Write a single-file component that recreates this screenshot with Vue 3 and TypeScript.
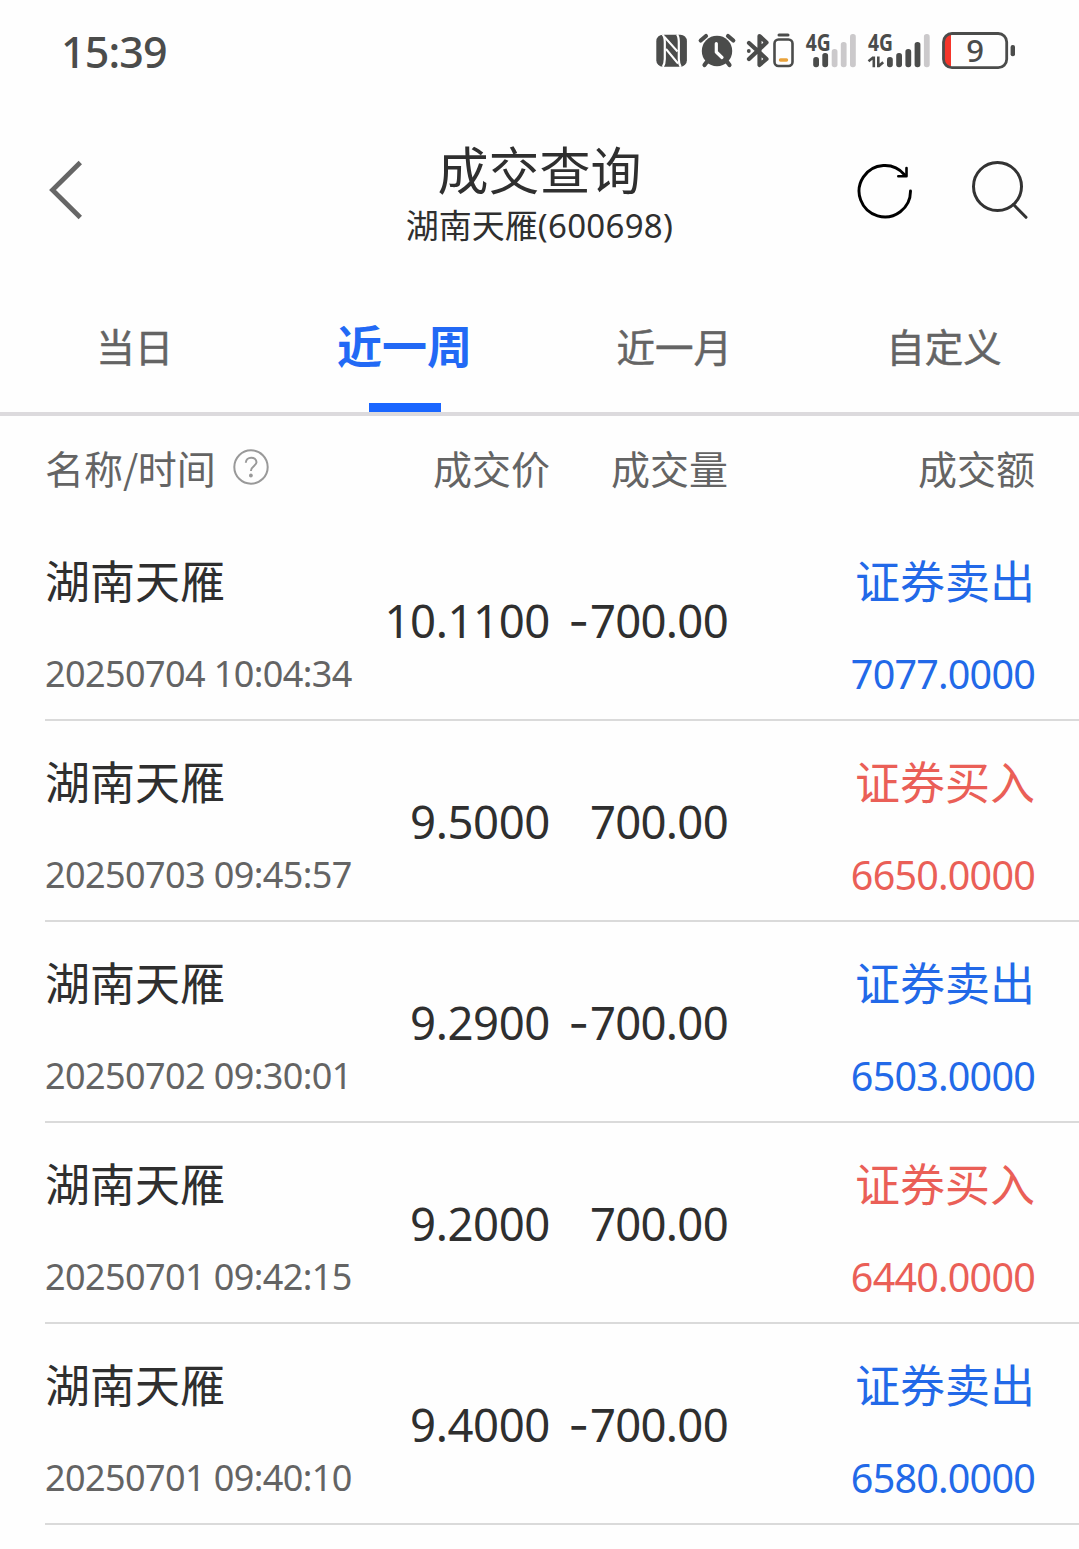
<script setup lang="ts">
import { ref } from 'vue'

interface Trade {
  name: string
  time: string
  price: string
  negative: boolean
  volume: string
  side: 'buy' | 'sell'
  amount: string
}

const tabs = ['当日', '近一周', '近一月', '自定义']
const active = ref(1)

const trades: Trade[] = [
  { name: '湖南天雁', time: '20250704 10:04:34', price: '10.1100', negative: true, volume: '700.00', side: 'sell', amount: '7077.0000' },
  { name: '湖南天雁', time: '20250703 09:45:57', price: '9.5000', negative: false, volume: '700.00', side: 'buy', amount: '6650.0000' },
  { name: '湖南天雁', time: '20250702 09:30:01', price: '9.2900', negative: true, volume: '700.00', side: 'sell', amount: '6503.0000' },
  { name: '湖南天雁', time: '20250701 09:42:15', price: '9.2000', negative: false, volume: '700.00', side: 'buy', amount: '6440.0000' },
  { name: '湖南天雁', time: '20250701 09:40:10', price: '9.4000', negative: true, volume: '700.00', side: 'sell', amount: '6580.0000' },
]
</script>

<template>
  <div class="screen">
    <div class="status">
      <span class="clock">15:39</span>
      <svg class="status-icons" width="364" height="60" viewBox="654 20 364 60">
        <!-- NFC -->
        <rect x="656.3" y="34.7" width="30.6" height="32" rx="6.5" fill="#4b4c4b" />
        <path d="M662.5 34.5Q664.8 36.500 664.8 42V59Q664.8 64 662.8 66.800" fill="none" stroke="#fff" stroke-width="2.200" />
        <path d="M677 34.5Q678.800 36.500 678.800 42V59Q678.800 64 680.700 66.800" fill="none" stroke="#fff" stroke-width="2.200" />
        <path d="M664.5 37L677.500 51.500M666 49L678 63.500" fill="none" stroke="#fff" stroke-width="2" />
        <!-- alarm -->
        <circle cx="717" cy="51" r="15.2" fill="#4b4c4b" />
        <path d="M700.700 40.500L706 36M733.300 40.500L728 36M707.500 61L704.500 65M726.500 61L729.500 65" stroke="#4b4c4b" stroke-width="4.200" stroke-linecap="round" />
        <path d="M716.300 43.500V52L722 57.500" fill="none" stroke="#fff" stroke-width="3.200" stroke-linecap="round" stroke-linejoin="round" />
        <!-- bluetooth with accessory battery -->
        <path d="M749 43L766.500 59L759.500 65V36L766.500 42.500L749 59" fill="none" stroke="#4b4c4b" stroke-width="4.200" stroke-linecap="round" stroke-linejoin="round" />
        <circle cx="748.800" cy="51" r="1.900" fill="#4b4c4b" />
        <rect x="774.500" y="39.500" width="18" height="26.500" rx="4" fill="none" stroke="#4b4c4b" stroke-width="2.600" />
        <path d="M779 35H788" stroke="#4b4c4b" stroke-width="3" stroke-linecap="round" />
        <path d="M780.500 60H786.500" stroke="#e9a23b" stroke-width="3.400" stroke-linecap="round" />
        <!-- signal 1 -->
        <text x="805.800" y="50.600" class="net" textLength="25" lengthAdjust="spacingAndGlyphs">4G</text>
        <g fill="#4b4c4b">
          <rect x="813.200" y="57" width="5.800" height="10.200" rx="2.700" />
          <rect x="822.300" y="53" width="5.800" height="14.200" rx="2.700" />
        </g>
        <g fill="#cbc9cb">
          <rect x="831.700" y="49" width="5.800" height="18.200" rx="2.700" />
          <rect x="840.800" y="42" width="5.800" height="25.200" rx="2.700" />
          <rect x="850" y="34" width="5.800" height="33.200" rx="2.700" />
        </g>
        <!-- signal 2 -->
        <text x="867.900" y="50.600" class="net" textLength="25" lengthAdjust="spacingAndGlyphs">4G</text>
        <path d="M868.500 61.300L873.500 57.300M873.800 56.500V67.200M878.300 56.500V67.200M878.600 66.300L883.200 62.300" fill="none" stroke="#4b4c4b" stroke-width="2.600" />
        <g fill="#4b4c4b">
          <rect x="887" y="57" width="5.800" height="10.200" rx="2.700" />
          <rect x="896.200" y="53" width="5.800" height="14.200" rx="2.700" />
          <rect x="905.400" y="49" width="5.800" height="18.200" rx="2.700" />
          <rect x="914.600" y="42" width="5.800" height="25.200" rx="2.700" />
        </g>
        <rect x="923.900" y="34" width="5.800" height="33.200" rx="2.700" fill="#cbc9cb" />
        <!-- battery -->
        <path d="M951 34V67.500Q943.700 67 943.700 59V42Q943.700 34 951 34Z" fill="#f5352a" />
        <rect x="943.500" y="33.500" width="63.200" height="34.200" rx="8.500" fill="none" stroke="#4b4c4b" stroke-width="2.800" />
        <rect x="1010.600" y="45" width="4.400" height="11.200" rx="2" fill="#4b4c4b" />
        <text x="975" y="61.800" class="level" text-anchor="middle">9</text>
      </svg>
    </div>

    <header class="nav">
      <svg class="back" width="40" height="64" viewBox="0 0 40 64">
        <path d="M35.300 4.500L7.500 32L35.300 59.500" fill="none" stroke="#666" stroke-width="4.800" />
      </svg>
      <div class="heading">
        <h1>成交查询</h1>
        <p>湖南天雁<span>(600698)</span></p>
      </div>
      <div class="actions">
        <svg width="60" height="60" viewBox="855 160 60 60">
          <path d="M910.500 191A25.700 25.700 0 1 1 904.500 174.700" fill="none" stroke="#000" stroke-width="2.900" stroke-linecap="round" />
          <path d="M898.300 176.300H906.500V168" fill="none" stroke="#000" stroke-width="2.600" stroke-linecap="round" stroke-linejoin="round" />
        </svg>
        <svg width="60" height="60" viewBox="970 159 60 60">
          <circle cx="997.500" cy="186.500" r="24" fill="none" stroke="#333" stroke-width="3" />
          <path d="M1013.500 204.500L1026 217.300" stroke="#333" stroke-width="3" stroke-linecap="round" />
        </svg>
      </div>
    </header>

    <nav class="tabs">
      <button v-for="(tab, i) in tabs" :key="tab" :class="{ active: i === active }" @click="active = i">{{ tab }}</button>
    </nav>

    <div class="cols head">
      <div class="first">
        <span>名称<i>/</i>时间</span>
        <svg width="38" height="38" viewBox="0 0 38 38">
          <circle cx="19" cy="19" r="16.700" fill="none" stroke="#999" stroke-width="2" />
          <path d="M13.800 14.800C13.800 8 24.500 8 24.500 14.300C24.500 18 18.900 18.200 18.900 23" fill="none" stroke="#999" stroke-width="2" />
          <circle cx="18.900" cy="27.500" r="1.900" fill="#999" />
        </svg>
      </div>
      <span>成交价</span>
      <span>成交量</span>
      <span>成交额</span>
    </div>

    <ul class="list">
      <li v-for="t in trades" :key="t.time" class="cols row">
        <div class="stack">
          <span class="name">{{ t.name }}</span>
          <span class="time">{{ t.time }}</span>
        </div>
        <span class="num">{{ t.price }}</span>
        <span class="num volume"><span v-if="t.negative" class="minus">-</span>{{ t.volume }}</span>
        <div class="stack end" :class="t.side">
          <span class="name">{{ t.side === 'sell' ? '证券卖出' : '证券买入' }}</span>
          <span class="amount">{{ t.amount }}</span>
        </div>
      </li>
    </ul>
  </div>
</template>

<style>
body {
  margin: 0;
  background: #fefefe;
}
</style>

<style scoped>
.screen {
  width: 1079px;
  height: 1549px;
  overflow: hidden;
  background: #fefefe;
  color: #2f2f2f;
  font-family: "Noto Sans", "Noto Sans CJK SC", sans-serif;
}
.status {
  height: 100px;
  display: flex;
  justify-content: space-between;
  align-items: center;
  padding: 0 61px;
  box-sizing: border-box;
}
.status-icons {
  overflow: visible;
}
.clock {
  padding-top: 3px;
  font-size: 43px;
  font-weight: 500;
  color: #4b4c4b;
  line-height: 60px;
  letter-spacing: -0.9px;
}
.net {
  font: 700 23.500px "Noto Sans", sans-serif;
  fill: #4b4c4b;
}
.level {
  font: 500 31px "Noto Sans", sans-serif;
  fill: #4b4c4b;
}
.nav {
  height: 180px;
  display: grid;
  grid-template-columns: 260px 1fr 260px;
  box-sizing: border-box;
  padding: 0 49px 0 45px;
}
.back {
  margin-top: 58px;
}
.heading {
  text-align: center;
  padding-left: 4px;
}
h1 {
  margin: 37px 0 0;
  font: 400 51px/62px "Noto Sans CJK SC", sans-serif;
}
.heading p {
  margin: 8px 0 0;
  font: 400 33px/34px "Noto Sans CJK SC", sans-serif;
}
.heading p span {
  font-family: "Noto Sans", sans-serif;
  letter-spacing: 0.3px;
}
.actions {
  display: flex;
  justify-content: flex-end;
  gap: 55px;
  padding-top: 60px;
}
.actions svg:last-child {
  margin-top: -1px;
}
.tabs {
  display: flex;
  height: 136px;
  box-sizing: border-box;
  border-bottom: 4px solid #dcdadd;
}
.tabs button {
  flex: 1;
  position: relative;
  padding: 0;
  border: 0;
  background: none;
  color: #646464;
  font: 400 38.500px/130px "Noto Sans CJK SC", sans-serif;
  -webkit-text-stroke: 0.5px currentColor;
  padding-bottom: 2px;
}
.tabs .active {
  color: #2269f5;
  font-size: 45px;
  font-weight: 700;
  -webkit-text-stroke: 0;
}
.tabs .active::after {
  content: "";
  position: absolute;
  left: 50%;
  bottom: 0;
  width: 72px;
  height: 9px;
  margin-left: -36px;
  background: #1a66ff;
}
.cols {
  display: grid;
  grid-template-columns: 335px 170px 178px 307px;
  align-items: center;
  margin-left: 45px;
}
.cols > :nth-child(n + 2) {
  text-align: right;
}
.head {
  height: 104px;
  color: #646464;
  font: 400 39px/100px "Noto Sans CJK SC", sans-serif;
  padding-bottom: 3px;
  box-sizing: border-box;
}
.first {
  display: flex;
  align-items: center;
  gap: 16px;
}
.first i {
  font-style: normal;
  margin-right: -0.5px;
}
.list {
  list-style: none;
  margin: 0;
  padding: 0;
}
.row {
  height: 201px;
  box-sizing: border-box;
  border-bottom: 2px solid #dadada;
}
.stack {
  display: flex;
  flex-direction: column;
  align-items: flex-start;
  white-space: nowrap;
  padding-top: 10px;
}
.end {
  align-items: flex-end;
}
.name {
  font: 400 45px/60px "Noto Sans CJK SC", sans-serif;
}
.time {
  margin-top: 39px;
  font-size: 36px;
  line-height: 50px;
  color: #646464;
  letter-spacing: -0.6px;
}
.amount {
  margin-top: 39px;
  font-size: 39.500px;
  line-height: 50px;
  letter-spacing: -0.8px;
}
.num {
  font-size: 45.500px;
  line-height: 60px;
  letter-spacing: -0.4px;
  white-space: nowrap;
}
.volume {
  letter-spacing: -0.7px;
}
.minus {
  font-family: Inter, sans-serif;
  line-height: 1;
  letter-spacing: 0.8px;
}
.sell {
  color: #2269e8;
}
.buy {
  color: #ea5f57;
}
</style>
